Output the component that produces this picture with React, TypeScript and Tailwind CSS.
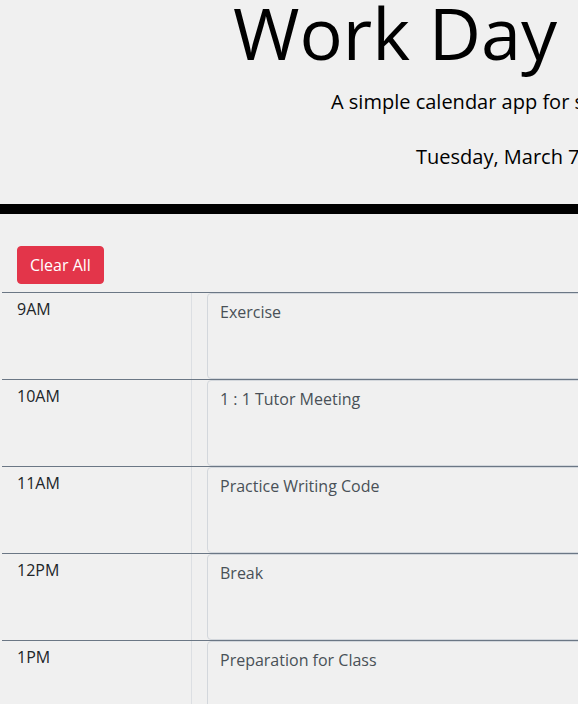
const hours = [
  { label: '9AM', task: 'Exercise' },
  { label: '10AM', task: '1 : 1 Tutor Meeting' },
  { label: '11AM', task: 'Practice Writing Code' },
  { label: '12PM', task: 'Break' },
  { label: '1PM', task: 'Preparation for Class' },
  { label: '2PM', task: '' },
];

function HourRow({ label, task }: { label: string; task: string }) {
  return (
    <div className="flex border-t border-[#6b7785]">
      <div className="w-[190px] shrink-0 border-r border-[#dcdfe3] pl-[15px] pt-1 text-base leading-6 text-[#212529]">
        {label}
      </div>
      <div className="shrink-0 pl-[15px]">
        <textarea
          defaultValue={task}
          className="block h-[86px] w-[700px] resize-none rounded border border-[#d3d7dc] bg-transparent px-3 py-1.5 text-base leading-6 text-[#495057] outline-none"
        />
      </div>
    </div>
  );
}

export default function App() {
  return (
    <div className="h-[704px] w-full overflow-hidden bg-[#f0f0f0] font-['Open_Sans',sans-serif]">
      <header className="whitespace-nowrap border-b-[10px] border-black pb-8">
        <h1 className="pl-[233px] text-[72px] font-normal leading-[64px] text-black">
          Work Day Scheduler
        </h1>
        <p className="mt-[23px] pl-[331px] text-xl leading-[30px] text-black">
          A simple calendar app for scheduling your work day
        </p>
        <p className="mt-[25px] pl-[416px] text-xl leading-[30px] text-black">
          Tuesday, March 7th, 2023
        </p>
      </header>

      <main>
        <button className="ml-[17px] mt-8 mb-2 rounded border border-[#e3354a] bg-[#e3354a] px-3 py-1.5 text-base leading-6 text-white">
          Clear All
        </button>
        <div className="ml-[2px] w-[1200px]">
          {hours.map((h) => (
            <HourRow key={h.label} label={h.label} task={h.task} />
          ))}
        </div>
      </main>
    </div>
  );
}
